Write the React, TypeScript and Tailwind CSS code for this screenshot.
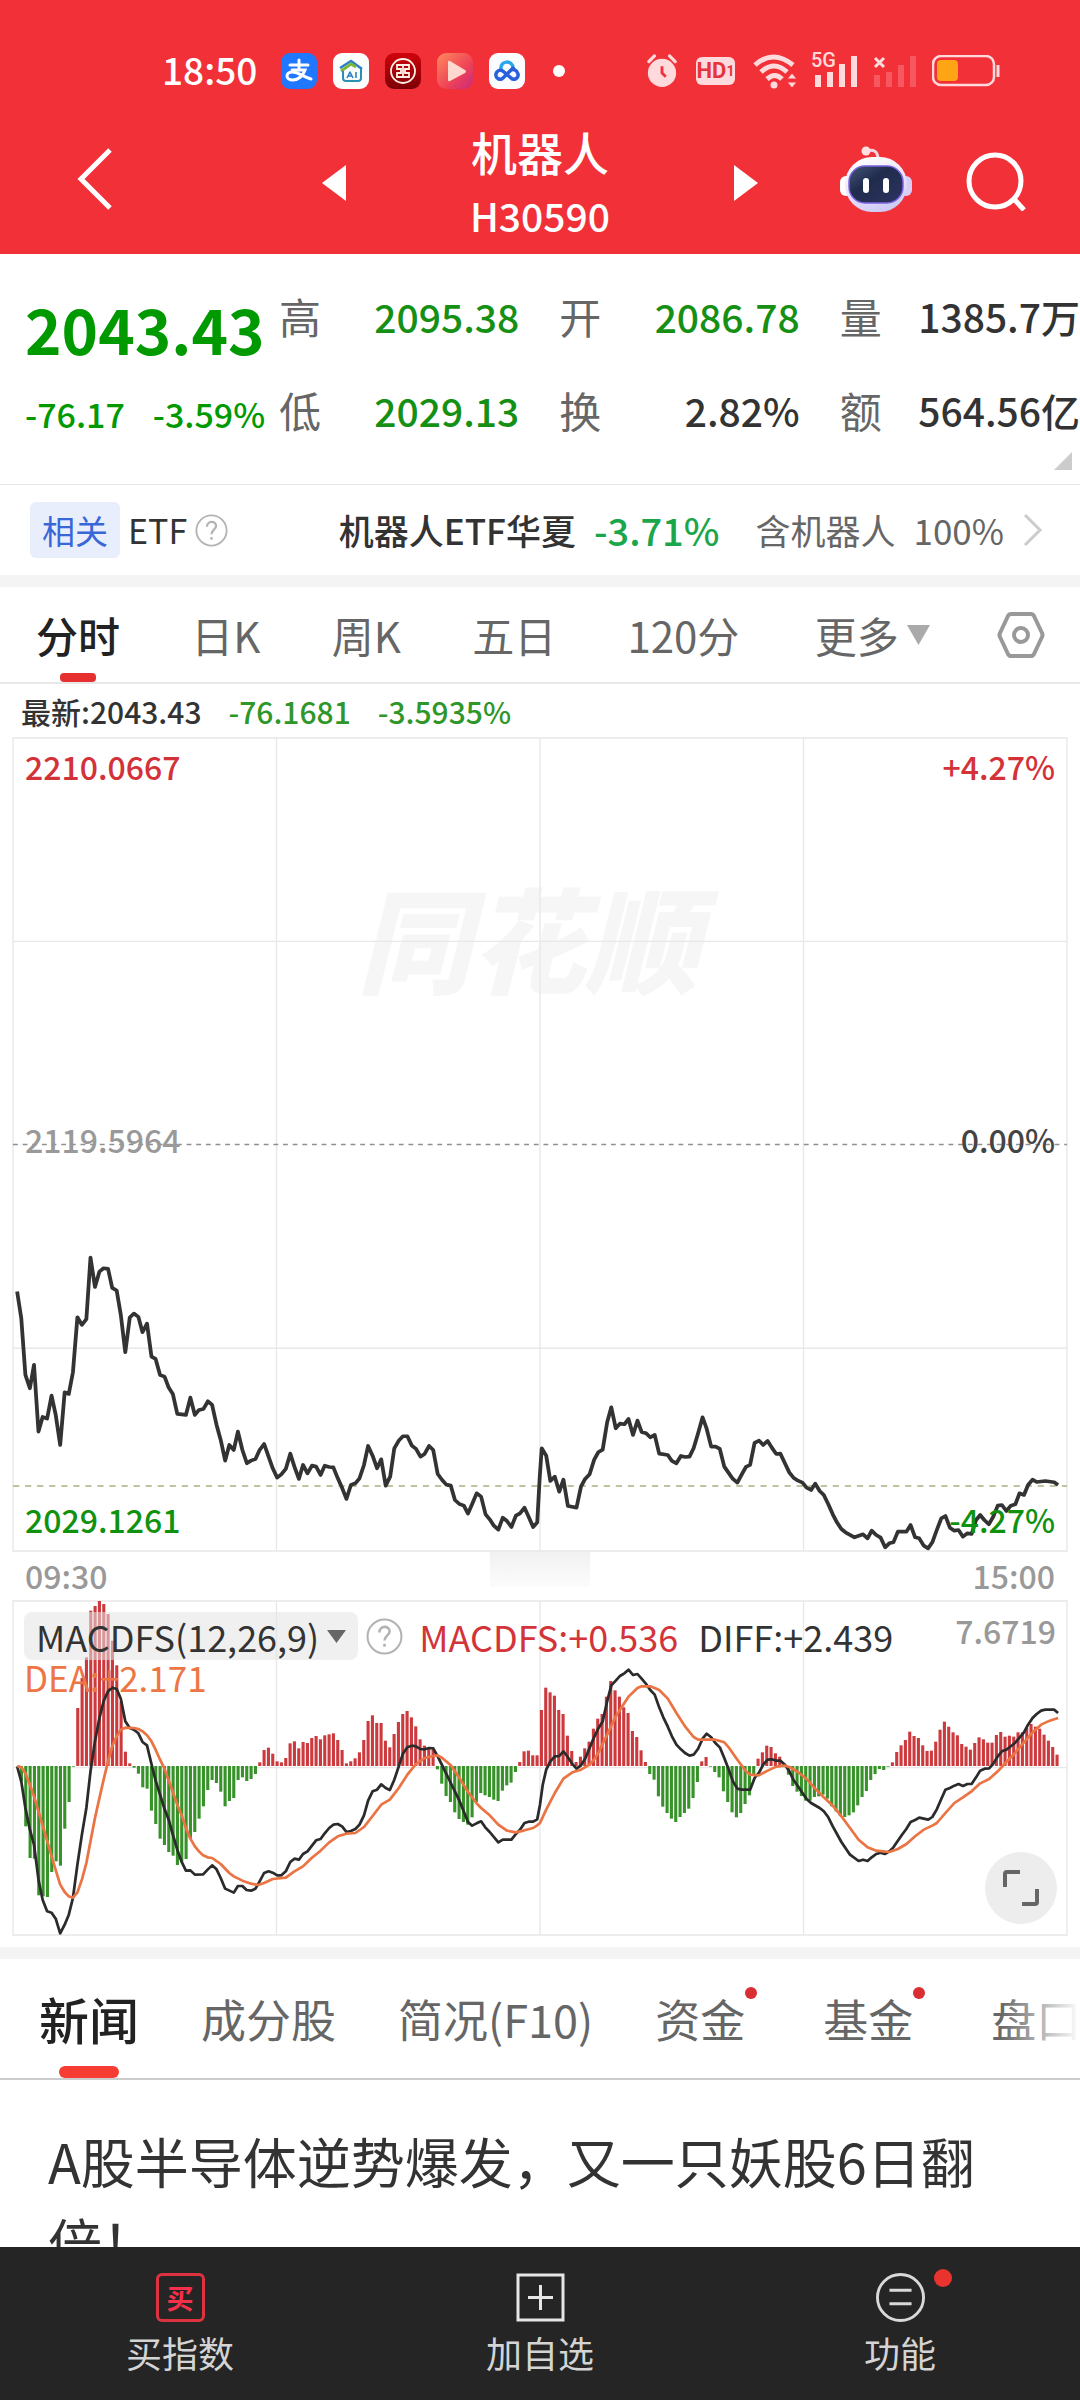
import { useState } from "react";

type Point = [number, number];

//Chart units: 3060 wide, the afternoon session starts at AFTERNOON
const AFTERNOON = 1568;
const MACD_ZERO = 564;
const BAR_STEP = 12.58;

const parse = (data: string): Point[] =>
  data
    .trim()
    .split(/\s+/)
    .map((pair) => pair.split(",").map(Number) as Point);

const toPoints = (morning: string, afternoon: string) =>
  [
    ...parse(morning),
    ...parse(afternoon).map(([x, y]) => [x + AFTERNOON, y]),
  ]
    .map((p) => p.join(","))
    .join(" ");

const price = toPoints(
  `50,220 62,300 74,470 87,510 99,440 112,640 124,596 137,601 150,532 162,590 175,680 188,522 200,527 212,462 225,297 238,320 251,303 263,118
  276,206 289,160 301,150 314,152 326,209 339,217 351,290 364,402 377,298 389,286 402,296 414,342 427,316 440,415 452,422 465,470 478,475
  490,508 502,527 515,587 540,590 553,538 566,590 578,575 591,572 604,549 616,560 629,620 641,665 654,727 666,680 679,695 691,640 704,695
  717,735 729,727 742,722 754,695 767,677 780,715 792,750 805,778 817,768 830,752 843,706 855,745 868,782 880,740 893,765 906,742 918,745
  931,770 943,742 956,746 968,747 981,780 994,810 1006,842 1019,800 1032,795 1044,780 1057,740 1069,683 1082,712 1095,750 1107,723
  1120,802 1133,775 1145,690 1158,667 1170,654 1183,654 1196,682 1208,692 1221,715 1233,707 1246,683 1258,695 1271,767 1284,785 1296,799
  1309,802 1321,845 1334,857 1347,862 1359,886 1372,855 1384,825 1397,835 1410,888 1422,903 1434,922 1447,934 1460,898 1472,908 1485,926
  1498,892 1510,885 1523,868 1535,895 1548,926 1560,912 1567,780`,
  `5,690 18,712 30,788 43,775 56,820 68,784 81,863 106,868 119,805 131,782 144,768 157,725 169,702 182,694 195,612 207,567 220,630 232,616
  245,618 257,602 270,650 283,607 295,641 308,645 320,657 333,650 346,706 371,710 383,728 396,735 409,713 421,716 434,715 446,690 459,645
  472,597 484,632 497,685 510,685 522,692 535,745 560,782 573,793 585,770 598,746 610,740 623,674 636,667 648,680 661,668 673,688 686,707
  698,706 711,735 724,763 736,778 749,787 762,793 774,808 787,815 799,796 812,818 824,830 837,858 850,888 862,912 875,932 888,943 913,957
  938,948 951,960 963,937 976,950 989,958 1002,987 1014,975 1026,972 1039,940 1064,940 1076,920 1089,957 1101,960 1114,982 1127,990
  1139,972 1152,935 1165,900 1177,893 1190,928 1203,937 1215,935 1228,955 1241,945 1253,947 1266,905 1278,890 1290,905 1303,918 1316,895
  1329,862 1341,860 1354,878 1367,862 1380,858 1392,825 1405,830 1417,800 1430,784 1442,791 1467,788 1493,792 1504,800`
);

const diff = toPoints(
  `50,565 62,610 74,690 87,755 99,800 112,905 124,965 137,1000 150,1004 162,1022 175,1066 188,1040 200,1010 212,960 225,860 238,770
  251,690 263,580 276,490 289,420 301,370 314,340 326,329 339,333 351,362 364,430 377,450 389,455 402,466 414,492 427,502 440,558 452,608
  465,650 477,690 490,725 502,770 515,815 527,850 540,878 553,877 566,890 590,889 603,875 616,862 629,874 641,900 654,932 679,944 691,924
  704,924 716,936 729,938 742,932 754,910 767,885 780,880 792,884 805,892 817,892 830,880 843,852 855,842 868,845 880,828 893,820 906,803
  918,787 931,783 943,766 956,750 968,740 981,738 994,746 1006,762 1019,759 1032,753 1044,740 1057,712 1069,668 1082,640 1095,635
  1107,619 1120,630 1132,636 1145,605 1158,565 1170,527 1183,508 1196,503 1208,505 1220,513 1233,514 1246,510 1258,511 1271,535 1284,562
  1309,615 1334,668 1359,732 1371,743 1384,736 1397,730 1409,748 1422,762 1447,793 1460,785 1485,785 1498,768 1510,755 1523,735 1535,731
  1548,731 1560,724`,
  `0,680 8,620 18,575 30,550 43,535 56,534 68,520 81,538 94,558 106,572 119,562 131,542 144,510 157,478 169,452 182,430 195,370 207,322
  220,308 232,294 245,286 257,275 270,291 283,288 295,302 308,318 320,336 333,350 346,388 358,418 371,446 383,475 396,500 409,514 421,525
  434,533 446,530 459,512 472,482 484,467 497,478 509,495 522,508 535,540 547,572 560,610 573,632 585,635 610,635 623,600 636,584 648,560
  661,545 673,544 686,548 698,548 711,560 724,580 736,606 749,625 762,645 774,663 787,675 812,690 824,700 837,718 850,745 875,792 900,830
  925,849 938,845 951,849 963,838 976,828 989,824 1001,828 1014,820 1026,808 1051,770 1064,752 1076,732 1089,726 1101,719 1127,725
  1139,717 1152,694 1165,663 1177,635 1190,630 1203,623 1215,618 1228,624 1241,618 1253,618 1266,598 1278,578 1291,572 1304,571 1316,557
  1329,535 1342,519 1354,515 1379,495 1405,463 1417,440 1430,420 1442,408 1455,398 1467,395 1493,395 1504,405`
);

const dea = toPoints(
  `50,564 62,568 74,586 87,620 99,655 112,700 124,742 137,788 150,835 162,876 175,920 188,942 200,955 212,959 225,943 238,905 251,855
  263,790 276,720 289,660 301,605 314,550 326,505 339,475 351,455 364,449 389,450 402,453 414,460 427,472 440,490 452,515 465,545 477,570
  490,608 502,642 515,680 527,710 540,750 553,782 566,805 578,820 590,832 603,838 616,840 641,858 666,885 679,895 704,908 729,917 750,921
  767,915 792,903 830,899 855,880 880,865 905,840 931,818 956,793 981,775 1006,767 1032,765 1057,747 1082,714 1107,680 1132,665 1158,630
  1183,590 1208,558 1233,540 1258,534 1271,532 1284,540 1309,562 1334,600 1359,642 1384,676 1397,690 1422,712 1447,740 1472,758 1498,763
  1523,757 1548,750 1560,742`,
  `0,735 18,695 43,645 68,602 94,583 119,575 144,560 157,545 169,525 195,470 220,415 245,375 257,356 283,330 295,325 320,325 333,330
  346,336 371,362 396,405 421,445 446,477 459,485 484,485 509,485 535,493 547,507 573,545 598,580 610,590 635,592 661,578 686,566 711,563
  724,567 749,582 774,603 799,632 824,658 850,683 875,715 900,750 925,785 951,808 976,818 1014,822 1039,813 1064,798 1089,775 1114,755
  1139,743 1152,735 1177,705 1203,675 1228,658 1253,640 1278,616 1304,603 1329,580 1354,552 1379,525 1405,493 1430,463 1455,440 1480,428
  1504,420`
);

//One value per minute
const macdBars = [
  610, 745, 840, 842, 952, 955, 957, 882, 850, 863, 752, 672, 566, 390, 300,
  238, 98, 84, 69, 78, 108, 188, 262, 370, 521, 556, 569, 587, 628, 632, 698,
  738, 782, 801, 822, 833, 861, 850, 843, 780, 762, 722, 685, 636, 606, 615,
  641, 685, 669, 660, 606, 598, 609, 603, 588, 553, 516, 509, 527, 550, 553,
  540, 496, 490, 511, 492, 495, 480, 474, 484, 472, 469, 466, 486, 516, 556,
  550, 541, 523, 486, 429, 412, 435, 435, 488, 508, 468, 432, 408, 399, 418,
  445, 484, 503, 512, 515, 574, 617, 654, 672, 703, 723, 732, 740, 718, 672,
  645, 652, 657, 665, 669, 638, 622, 614, 582, 552, 520, 518, 532, 532, 396,
  329, 343, 353, 396, 408, 473, 519, 552, 536, 511, 491, 452, 422, 408, 356,
  309, 337, 356, 388, 405, 459, 477, 517, 552, 588, 605, 655, 686, 705, 722,
  732, 717, 705, 692, 660, 612, 550, 537, 566, 582, 598, 640, 672, 703, 718,
  705, 678, 652, 592, 542, 523, 503, 507, 526, 536, 558, 590, 624, 641, 654,
  668, 668, 657, 655, 650, 662, 685, 700, 714, 717, 712, 703, 682, 657, 639,
  606, 588, 573, 576, 566, 553, 522, 502, 486, 461, 474, 480, 502, 519, 518,
  491, 455, 431, 446, 463, 472, 498, 506, 515, 495, 478, 484, 494, 494, 471,
  462, 476, 473, 476, 463, 463, 450, 438, 446, 452, 470, 488, 507, 530,
];

const quotes = [
  { label: "高", value: "2095.38", color: "text-[#159015]" },
  { label: "开", value: "2086.78", color: "text-[#159015]" },
  { label: "量", value: "1385.7万", color: "text-[#333333]" },
  { label: "低", value: "2029.13", color: "text-[#159015]" },
  { label: "换", value: "2.82%", color: "text-[#333333]" },
  { label: "额", value: "564.56亿", color: "text-[#333333]" },
];

const periods = ["分时", "日K", "周K", "五日", "120分"];

const newsTabs = [
  { name: "新闻", dot: false },
  { name: "成分股", dot: false },
  { name: "简况(F10)", dot: false },
  { name: "资金", dot: true },
  { name: "基金", dot: true },
  { name: "盘口", dot: false },
];

function AppIcons() {
  return (
    <div className="flex items-center gap-4">
      <svg width="36" height="36" viewBox="0 0 36 36">
        <rect width="36" height="36" rx="9" fill="#1f78ff" />
        <g fill="none" stroke="#fff" strokeLinecap="round">
          <path d="M9 12h18M18 7v10" strokeWidth="3" />
          <path
            d="M11 17h13c-2 6-7 10-12 10-4 0-6-2-6-4s2-4 5-4c6 0 12 5 19 7"
            strokeWidth="3"
          />
        </g>
      </svg>
      <svg width="36" height="36" viewBox="0 0 36 36">
        <rect width="36" height="36" rx="9" fill="#fcfdfd" />
        <g fill="none" strokeLinejoin="round">
          <path d="M7 15 18 8l11 8" stroke="#2a82c4" strokeWidth="2.5" />
          <path d="M8 18 18 11l5 3" stroke="#7db83c" strokeWidth="3" />
          <path
            d="M10 18v7q0 3 3 3h12q3 0 3-3v-9"
            stroke="#2a8fb5"
            strokeWidth="2"
          />
          <path
            d="m14 25 3-6 3 6m-5-2h4M23 19v6"
            stroke="#2a82c4"
            strokeWidth="1.6"
          />
        </g>
      </svg>
      <svg width="36" height="36" viewBox="0 0 36 36">
        <defs>
          <linearGradient id="bank" x2="0" y2="1">
            <stop stopColor="#d0020c" />
            <stop offset="1" stopColor="#7d0006" />
          </linearGradient>
        </defs>
        <rect width="36" height="36" rx="9" fill="url(#bank)" />
        <g fill="none" stroke="#fff0e6" strokeWidth="1.8">
          <circle cx="18" cy="18" r="12" />
          <path d="M12 12h12v4h-4v4h4v4H12v-4h4v-4h-4zM18 12v12" />
        </g>
      </svg>
      <svg width="36" height="36" viewBox="0 0 36 36">
        <defs>
          <linearGradient id="video" x2="1" y2="1">
            <stop stopColor="#ff8a5c" />
            <stop offset=".6" stopColor="#ee4257" />
            <stop offset="1" stopColor="#c92a7c" />
          </linearGradient>
        </defs>
        <rect width="36" height="36" rx="9" fill="url(#video)" />
        <path
          d="M11 9v18q0 2 2 1l15-8q2-1.5 0-3L13 8q-2-1-2 1z"
          fill="#ffd9d0"
        />
      </svg>
      <svg width="36" height="36" viewBox="0 0 36 36">
        <rect width="36" height="36" rx="9" fill="#fbfcff" />
        <g fill="none" strokeWidth="3.5" strokeLinecap="round">
          <path d="M12 16c-1-9 12-9 12-1" stroke="#28a7ee" />
          <path
            d="M24 15 14 25c-3 3-8 0-7-4s5-5 8-2l7 6c3 3 8 0 7-4s-5-6-8-3"
            stroke="#2961dd"
          />
        </g>
      </svg>
    </div>
  );
}

function SystemIcons() {
  return (
    <div className="flex items-center">
      <svg width="32" height="36" viewBox="0 0 34 36" className="mr-[18px]">
        <circle cx="17" cy="20" r="15" fill="#ffdadc" />
        <path
          d="m3 8 6-6M31 8l-6-6"
          stroke="#ffdadc"
          strokeWidth="3.5"
          strokeLinecap="round"
        />
        <path d="M17 13v7l4 4" stroke="#f23038" strokeWidth="3" fill="none" />
      </svg>
      <span className="mr-[18px] flex h-7 w-[39px] items-center justify-center rounded-md bg-[#ffdadc] font-['Roboto'] text-[22px] leading-7 font-bold text-[#e5343c]">
        HD<span className="text-sm">1</span>
      </span>
      <svg width="46" height="36" viewBox="0 0 46 36" className="mr-3">
        <g fill="none" stroke="#ffdadc" strokeWidth="5">
          <path d="M2 12q18-16 38 0M8 19q13-12 26 0M14 26q8-7 15 0" />
        </g>
        <circle cx="21" cy="32" r="3.5" fill="#ffdadc" />
        <path
          d="M34 26h10l-5-6zM34 29h10l-5 6z"
          fill="#ffdadc"
          stroke="#f23038"
        />
      </svg>
      <div className="relative mr-[14px]">
        <svg width="47" height="36" viewBox="0 0 47 36" fill="#ffdadc">
          <path d="M4 22h6v12H4zM16 19h6v15h-6zM28 11h6v23h-6zM40 3h6v31h-6z" />
        </svg>
        <span className="absolute -top-[2px] left-0 bg-[#f23038] font-['Roboto'] text-xl leading-[18px] font-medium text-[#ffdadc]">
          5G
        </span>
      </div>
      <svg width="46" height="36" viewBox="0 0 46 36" className="mr-[14px]">
        <path
          d="M2 22h6v12H2zM14 19h6v15h-6zM26 12h6v22h-6zM38 3h6v31h-6z"
          fill="#f7585f"
        />
        <path d="m3 5 9 9m0-9-9 9" stroke="#ffdadc" strokeWidth="3" />
      </svg>
      <svg width="68" height="32" viewBox="0 0 68 32">
        <rect
          x="1"
          y="1"
          width="61"
          height="29"
          rx="8"
          fill="none"
          stroke="#ffdadc"
          strokeWidth="2.5"
        />
        <rect x="5" y="5" width="21" height="21" rx="4" fill="#ffa414" />
        <path d="M66 10v12" stroke="#ffdadc" strokeWidth="3" />
      </svg>
    </div>
  );
}

function Header() {
  return (
    <header className="bg-[#f23038] pt-[47px] pb-[7px] text-white">
      <div className="flex h-12 items-center justify-between pr-20 pl-[162px]">
        <div className="flex items-center">
          <span className="mr-6 pb-1 text-[37px] leading-12 font-medium">
            18:50
          </span>
          <AppIcons />
          <span className="ml-7 size-3 rounded-full bg-white" />
        </div>
        <SystemIcons />
      </div>
      <div className="grid grid-cols-[1fr_436px_1fr] items-center pt-6">
        <button
          aria-label="返回"
          className="justify-self-start pb-2 pl-[76px]"
        >
          <svg width="38" height="64" viewBox="0 0 38 64" fill="none">
            <path d="M34 3 5 32l29 29" stroke="#fff" strokeWidth="5" />
          </svg>
        </button>
        <div className="flex items-center justify-between">
          <button aria-label="上一个">
            <svg width="24" height="36" viewBox="0 0 24 36" fill="#fff">
              <path d="M24 0v36L0 18z" />
            </svg>
          </button>
          <h1 className="text-center leading-[64px]">
            <span className="block text-[46px] font-medium">机器人</span>
            <span className="block text-[39px] font-medium">H30590</span>
          </h1>
          <button aria-label="下一个">
            <svg width="24" height="36" viewBox="0 0 24 36" fill="#fff">
              <path d="M0 0v36l24-18z" />
            </svg>
          </button>
        </div>
        <div className="flex items-center justify-end gap-[54px] pr-[54px]">
          <button aria-label="助手" className="pb-2">
            <svg width="72" height="66" viewBox="0 0 72 66">
              <defs>
                <linearGradient id="shell" x1=".3" x2=".7" y2="1">
                  <stop stopColor="#fff" />
                  <stop offset=".6" stopColor="#e6defa" />
                  <stop offset="1" stopColor="#c9c8f5" />
                </linearGradient>
                <linearGradient id="visor" x2="1" y2="1">
                  <stop stopColor="#46557a" />
                  <stop offset=".4" stopColor="#202c4c" />
                  <stop offset="1" stopColor="#2d3360" />
                </linearGradient>
              </defs>
              <path
                d="M27 5c6-2 11 0 11 8"
                fill="none"
                stroke="#f6d5e2"
                strokeWidth="3"
              />
              <circle cx="26" cy="5" r="4.5" fill="#ffdfe2" />
              <rect y="30" width="12" height="20" rx="6" fill="#fff" />
              <rect x="60" y="30" width="12" height="20" rx="6" fill="#d9cdf5" />
              <rect
                x="5"
                y="11"
                width="62"
                height="55"
                rx="27"
                fill="url(#shell)"
              />
              <rect
                x="9"
                y="20"
                width="54"
                height="37"
                rx="16"
                fill="url(#visor)"
                stroke="#7a63e0"
                strokeWidth="1.5"
              />
              <rect x="23" y="32" width="6" height="15" rx="3" fill="#fff" />
              <rect x="43" y="32" width="6" height="15" rx="3" fill="#fff" />
            </svg>
          </button>
          <button aria-label="搜索" className="pb-1">
            <svg width="60" height="60" viewBox="0 0 60 60" fill="none">
              <circle cx="29" cy="30" r="26" stroke="#fff" strokeWidth="5" />
              <path d="m48 48 10 11" stroke="#fff" strokeWidth="5" />
            </svg>
          </button>
        </div>
      </div>
    </header>
  );
}

function QuotePanel() {
  return (
    <section className="relative flex border-b border-[#e6e6e6] pb-[46px] pl-[25px]">
      <div className="w-[254px] shrink-0 pt-8 whitespace-nowrap text-[#009900]">
        <p className="text-[62px] leading-[84px] font-bold">2043.43</p>
        <p className="mt-5 flex gap-7 text-[34px] leading-12 font-medium">
          <span>-76.17</span>
          <span>-3.59%</span>
        </p>
      </div>
      <dl className="grid flex-1 grid-cols-3 gap-x-10 gap-y-[37px] pt-[34px]">
        {quotes.map((quote) => (
          <div
            key={quote.label}
            className="flex justify-between leading-14 whitespace-nowrap"
          >
            <dt className="text-[42px] text-[#666666]">{quote.label}</dt>
            <dd className={`text-[39px] font-medium ${quote.color}`}>
              {quote.value}
            </dd>
          </div>
        ))}
      </dl>
      <svg
        width="18"
        height="18"
        viewBox="0 0 18 18"
        className="absolute right-2 bottom-[14px]"
      >
        <path d="M18 0v18H0z" fill="#cccccc" />
      </svg>
    </section>
  );
}

function HelpIcon({ size }: { size: number }) {
  return (
    <svg width={size} height={size} viewBox="0 0 36 36" fill="none">
      <circle cx="18" cy="18" r="16.5" stroke="#b3b3b3" strokeWidth="2" />
      <path
        d="M13 14c0-7 10-7 10-1 0 4-5 4-5 9M18 25v3"
        stroke="#b3b3b3"
        strokeWidth="2.5"
      />
    </svg>
  );
}

function EtfRow() {
  return (
    <section className="flex items-center justify-between border-b-12 border-[#f4f4f4] py-[17px] pr-9 pl-[30px] text-[35px] leading-14 whitespace-nowrap text-[#333333]">
      <div className="flex items-center">
        <span className="mr-2 rounded-md bg-[#e8eefb] px-3 text-[33px] text-[#3a67d8]">
          相关
        </span>
        <span className="text-[34px]">ETF</span>
        <button aria-label="说明" className="ml-2">
          <HelpIcon size={33} />
        </button>
      </div>
      <a href="#etf" className="flex items-center">
        <span className="font-medium">机器人ETF华夏</span>
        <span className="ml-[18px] text-[38px] font-medium text-[#1ca64c]">
          -3.71%
        </span>
        <span className="ml-9 text-[#666666]">含机器人</span>
        <span className="ml-[18px] text-[#666666]">100%</span>
        <svg
          width="22"
          height="34"
          viewBox="0 0 22 34"
          fill="none"
          className="ml-[18px]"
        >
          <path d="m3 2 15 15L3 32" stroke="#cccccc" strokeWidth="3" />
        </svg>
      </a>
    </section>
  );
}

function PeriodTabs() {
  const [period, setPeriod] = useState("分时");

  return (
    <nav className="flex items-center justify-between border-b-2 border-[#e8e8e8] pr-[35px] pl-9 text-[42px] leading-[95px] whitespace-nowrap text-[#666666]">
      {periods.map((item) => (
        <button
          key={item}
          onClick={() => setPeriod(item)}
          className={
            item === period ? "relative font-medium text-[#222222]" : "relative"
          }
        >
          {item}
          {item === period && (
            <span className="absolute bottom-0 left-1/2 h-[9px] w-9 -translate-x-1/2 rounded bg-[#e63030]" />
          )}
        </button>
      ))}
      <button className="flex items-center gap-2 pl-1">
        更多
        <svg width="23" height="20" viewBox="0 0 23 20">
          <path d="M0 0h23L11.5 20z" fill="#aaaaaa" />
        </svg>
      </button>
      <button aria-label="设置" className="-ml-1">
        <svg width="48" height="48" viewBox="0 0 48 48" fill="none">
          <path
            d="M14 3h20q2 0 3 2l8 17q1 2 0 4l-8 17q-1 2-3 2H14q-2 0-3-2L3 26q-1-2 0-4l8-17q1-2 3-2z"
            stroke="#999999"
            strokeWidth="4"
          />
          <circle cx="24" cy="24" r="7" stroke="#999999" strokeWidth="4" />
        </svg>
      </button>
    </nav>
  );
}

function PriceChart() {
  return (
    <section className="px-[13px] text-[32px] leading-10 font-medium">
      <p className="flex gap-[27px] pl-2 text-[30px] leading-[54px] text-[#333333]">
        <span>最新:2043.43</span>
        <span className="text-[#2f962a]">-76.1681</span>
        <span className="text-[#2f962a]">-3.5935%</span>
      </p>
      <div className="relative">
        <div className="absolute inset-x-0 top-[132px] pr-6 text-center text-[114px] leading-[132px] font-black text-[#f6f6f6] italic">
          同花顺
        </div>
        <svg
          viewBox="38 -1440 3060 2438"
          preserveAspectRatio="none"
          className="relative block h-[813px] w-full overflow-visible"
          fill="none"
        >
          <g stroke="#e8e8e8" strokeWidth="4">
            <path d="M38-1440h3060V998H38z" />
            <path d="M38-830h3060M38 390h3060" />
            <path d="M803-1440V998M1568-1440V998M2333-1440V998" />
          </g>
          <path
            d="M38-221h3060"
            stroke="#8f8f8f"
            strokeWidth="5"
            strokeDasharray="14 14"
          />
          <path
            d="M38 803h3060"
            stroke="#aeae82"
            strokeWidth="5"
            strokeDasharray="18 17"
          />
          <polyline
            points={price}
            stroke="#333333"
            strokeWidth="11"
            strokeLinejoin="round"
          />
        </svg>
        <div className="absolute inset-0 flex flex-col justify-between px-3 pt-2 pb-3">
          <div className="flex justify-between text-[#d33238]">
            <span>2210.0667</span>
            <span>+4.27%</span>
          </div>
          <div className="flex justify-between pb-2 text-[#999999]">
            <span>2119.5964</span>
            <span className="text-[#444444]">0.00%</span>
          </div>
          <div className="flex justify-between text-[#109210]">
            <span>2029.1261</span>
            <span>-4.27%</span>
          </div>
        </div>
      </div>
      <div className="flex items-start justify-between px-3 leading-12 text-[#999999]">
        <span>09:30</span>
        <span className="h-9 w-[100px] bg-linear-to-b from-[#f1f1f1] to-[#fcfcfc]" />
        <span>15:00</span>
      </div>
    </section>
  );
}

function MacdChart() {
  return (
    <section className="relative mt-[2px] border-b-12 border-[#f4f4f4] px-[13px] pb-3 text-[36px] leading-12">
      <svg
        viewBox="38 69 3060 1002"
        preserveAspectRatio="none"
        className="block h-[334px] w-full overflow-visible"
        fill="none"
      >
        <path
          d="M38 69h3060v1002H38zM803 69v1002M1568 69v1002M2333 69v1002M38 569h3060"
          stroke="#e8e8e8"
          strokeWidth="4"
        />
        {macdBars.map((value, i) => (
          <rect
            key={i}
            x={62 + i * BAR_STEP - 4}
            y={Math.min(value, MACD_ZERO)}
            width="9"
            height={Math.abs(value - MACD_ZERO)}
            fill={value < MACD_ZERO ? "#cc3a3e" : "#379229"}
          />
        ))}
        <polyline
          points={diff}
          stroke="#2b2b2b"
          strokeWidth="8"
          strokeLinejoin="round"
        />
        <polyline
          points={dea}
          stroke="#ea7443"
          strokeWidth="8"
          strokeLinejoin="round"
        />
      </svg>
      <div className="absolute inset-x-6 top-[11px] flex items-center whitespace-nowrap">
        <button className="flex h-12 items-center gap-2 rounded-lg bg-[#e4e4e4]/55 px-3 text-[#333333]">
          MACDFS(12,26,9)
          <svg width="19" height="13" viewBox="0 0 19 13">
            <path d="M0 0h19L9.5 13z" fill="#666666" />
          </svg>
        </button>
        <button aria-label="指标说明" className="ml-2">
          <HelpIcon size={37} />
        </button>
        <span className="ml-4 text-[#d2343a]">MACDFS:+0.536</span>
        <span className="ml-5 text-[#333333]">DIFF:+2.439</span>
        <span className="ml-auto pb-3 text-[32px] leading-9 font-medium text-[#999999]">
          7.6719
        </span>
      </div>
      <p className="absolute top-[58px] left-6 text-[35px] leading-9 text-[#ee7544]">
        DEA:+2.171
      </p>
      <button
        aria-label="全屏"
        className="absolute right-[23px] bottom-[23px] flex size-18 items-center justify-center rounded-full bg-[#ededed]"
      >
        <svg width="38" height="38" viewBox="0 0 38 38" fill="none">
          <path
            d="M3 18V5q0-2 2-2h13M35 20v13q0 2-2 2H20"
            stroke="#666666"
            strokeWidth="4"
          />
        </svg>
      </button>
    </section>
  );
}

function News() {
  const [tab, setTab] = useState("新闻");

  return (
    <section>
      <nav className="relative flex gap-[62px] overflow-hidden border-b-2 border-[#cccccc] pl-[39px] text-[45px] leading-[119px] whitespace-nowrap text-[#666666]">
        {newsTabs.map((item) => (
          <button
            key={item.name}
            onClick={() => setTab(item.name)}
            className={
              item.name === tab
                ? "relative shrink-0 text-[50px] font-medium text-[#222222]"
                : item.dot
                  ? "relative shrink-0 pr-4"
                  : "relative shrink-0"
            }
          >
            {item.name}
            {item.dot && (
              <span className="absolute top-7 right-1 size-3 rounded-full bg-[#d92f33]" />
            )}
            {item.name === tab && (
              <span className="absolute bottom-0 left-1/2 h-3 w-[60px] -translate-x-1/2 rounded-full bg-[#f53d33]" />
            )}
          </button>
        ))}
        <span className="absolute inset-y-0 right-0 w-20 bg-linear-to-r from-white/0 to-white" />
      </nav>
      <article className="px-12 pt-10">
        <a
          href="#news"
          className="block text-[54px] leading-[81px] text-[#333333]"
        >
          A股半导体逆势爆发，又一只妖股6日翻倍！
        </a>
      </article>
    </section>
  );
}

function BottomBar() {
  return (
    <footer className="fixed inset-x-0 bottom-0 grid grid-cols-3 bg-[#252525] pt-[26px] pb-6 text-4xl text-[#d4d4d4]">
      <button className="flex flex-col items-center gap-[6px]">
        <span className="flex size-[49px] items-center justify-center rounded-md border-3 border-[#dd3340] text-[27px] leading-8 font-bold text-[#f5304a]">
          买
        </span>
        <span className="leading-12">买指数</span>
      </button>
      <button className="flex flex-col items-center gap-[6px]">
        <svg width="49" height="49" viewBox="0 0 49 49" fill="none">
          <path
            d="M2 2h45v45H2zM12 24.5h25M24.5 12v25"
            stroke="#e6e6e6"
            strokeWidth="3"
          />
        </svg>
        <span className="leading-12">加自选</span>
      </button>
      <button className="flex flex-col items-center gap-[6px]">
        <span className="relative">
          <svg width="51" height="49" viewBox="0 0 51 51" fill="none">
            <circle cx="25.5" cy="25.5" r="24" stroke="#d9d9d9" strokeWidth="3" />
            <path d="M14 18h23M14 32h23" stroke="#d9d9d9" strokeWidth="3" />
          </svg>
          <span className="absolute -top-1 -right-[26px] size-[18px] rounded-full bg-[#e8332f]" />
        </span>
        <span className="leading-12">功能</span>
      </button>
    </footer>
  );
}

export default function App() {
  return (
    <div className="min-h-screen bg-white font-['Noto_Sans_CJK_SC',sans-serif]">
      <Header />
      <QuotePanel />
      <EtfRow />
      <PeriodTabs />
      <PriceChart />
      <MacdChart />
      <News />
      <BottomBar />
    </div>
  );
}
